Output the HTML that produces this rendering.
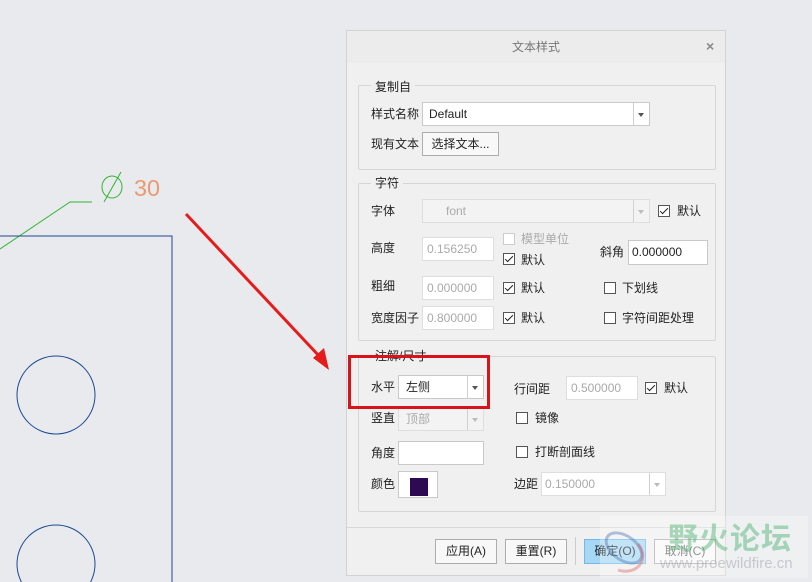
<!DOCTYPE html>
<html><head><meta charset="utf-8"><style>
*{margin:0;padding:0;box-sizing:border-box}
body{width:812px;height:582px;background:#e9eaed;position:relative;overflow:hidden;font-family:"Liberation Sans","Microsoft YaHei","Noto Sans CJK SC",sans-serif;font-size:12px;color:#222}
.a{position:absolute;white-space:nowrap}
.lbl{position:absolute;line-height:16px;white-space:nowrap}
.grp{position:absolute;border:1px solid #d6d6d6;border-radius:2px}
.gt{position:absolute;background:#f0f0f0;padding:0 4px;line-height:14px}
.in{position:absolute;background:#fff;border:1px solid #c9c9c9;line-height:22px;padding-left:6px}
.dis{background:#f3f3f3;border-color:#dedede;color:#aaa}
.cb{position:absolute;width:12px;height:12px;border:1px solid #555;background:#fff}
.cb.on:after{content:"";position:absolute;left:3px;top:0px;width:3px;height:7px;border:solid #222;border-width:0 1.5px 1.5px 0;transform:rotate(45deg)}
.cb.d{border-color:#ccc}
.arr{position:absolute;right:0;top:0;bottom:0;width:16px;border-left:1px solid #d0d0d0}
.arr:after{content:"";position:absolute;left:4px;top:10px;border:3.5px solid transparent;border-top:4px solid #555}
.dis .arr:after{border-top-color:#bbb}
.btn{position:absolute;background:#f8f8f8;border:1px solid #adadad;text-align:center;line-height:22px}
</style></head><body>
<svg class="a" style="left:0;top:0" width="346" height="582">
<polyline points="0,249 70,202 92,202" fill="none" stroke="#2fb52f" stroke-width="1"/>
<ellipse cx="112" cy="187" rx="10" ry="11" fill="none" stroke="#2fb52f"/>
<line x1="104" y1="202" x2="121" y2="172" stroke="#2fb52f"/>
<text x="134" y="196" fill="#ea9a70" font-size="23" font-family="Liberation Sans Narrow, Liberation Sans" textLength="26" lengthAdjust="spacingAndGlyphs">30</text>
<polyline points="0,236 172,236 172,582" fill="none" stroke="#1b4a94" stroke-width="1"/>
<circle cx="56" cy="395" r="39" fill="none" stroke="#1b4a94"/>
<circle cx="56" cy="564" r="39" fill="none" stroke="#1b4a94"/>
<line x1="186" y1="214" x2="320" y2="357" stroke="#e51c1c" stroke-width="3"/>
<polygon points="329,370 313,358 324,348" fill="#e51c1c"/>
</svg>
<div class="a" style="left:346px;top:30px;width:380px;height:546px;background:#f0f0f0;border:1px solid #d2d2d2"></div>
<div class="a" style="left:347px;top:31px;width:378px;height:32px;background:#ececec;text-align:center;line-height:32px;color:#777">文本样式</div>
<div class="a" style="left:706px;top:38px;color:#888;font-weight:bold;font-size:14px">×</div>

<div class="grp" style="left:358px;top:85px;width:358px;height:85px"></div>
<div class="gt" style="left:371px;top:80px">复制自</div>
<div class="lbl" style="left:371px;top:106px">样式名称</div>
<div class="in" style="left:422px;top:102px;width:228px;height:24px">Default<div class="arr"></div></div>
<div class="lbl" style="left:371px;top:136px">现有文本</div>
<div class="btn" style="left:422px;top:132px;width:77px;height:24px">选择文本...</div>

<div class="grp" style="left:358px;top:183px;width:358px;height:158px"></div>
<div class="gt" style="left:371px;top:176px">字符</div>
<div class="lbl" style="left:371px;top:203px">字体</div>
<div class="in dis" style="left:422px;top:199px;width:228px;height:24px;padding-left:23px">font<div class="arr"></div></div>
<div class="cb on" style="left:658px;top:205px"></div><div class="lbl" style="left:677px;top:203px">默认</div>
<div class="lbl" style="left:371px;top:240px">高度</div>
<div class="in dis" style="left:422px;top:237px;width:72px;height:24px;padding-left:4px;background:#fff">0.156250</div>
<div class="cb d" style="left:503px;top:233px"></div><div class="lbl" style="left:521px;top:231px;color:#aaa">模型单位</div>
<div class="cb on" style="left:503px;top:253px"></div><div class="lbl" style="left:521px;top:252px">默认</div>
<div class="lbl" style="left:600px;top:244px">斜角</div>
<div class="in" style="left:628px;top:240px;width:80px;height:25px;padding-left:3px">0.000000</div>
<div class="lbl" style="left:371px;top:278px">粗细</div>
<div class="in dis" style="left:422px;top:276px;width:72px;height:24px;padding-left:4px;background:#fff">0.000000</div>
<div class="cb on" style="left:503px;top:282px"></div><div class="lbl" style="left:521px;top:280px">默认</div>
<div class="cb" style="left:604px;top:282px"></div><div class="lbl" style="left:622px;top:280px">下划线</div>
<div class="lbl" style="left:371px;top:310px">宽度因子</div>
<div class="in dis" style="left:422px;top:306px;width:72px;height:24px;padding-left:4px;background:#fff">0.800000</div>
<div class="cb on" style="left:503px;top:312px"></div><div class="lbl" style="left:521px;top:310px">默认</div>
<div class="cb" style="left:604px;top:312px"></div><div class="lbl" style="left:622px;top:310px">字符间距处理</div>

<div class="grp" style="left:358px;top:356px;width:358px;height:156px"></div>
<div class="gt" style="left:371px;top:349px">注解/尺寸</div>
<div class="lbl" style="left:371px;top:379px">水平</div>
<div class="in" style="left:398px;top:375px;width:86px;height:24px;padding-left:7px">左侧<div class="arr"></div></div>
<div class="lbl" style="left:371px;top:410px">竖直</div>
<div class="in dis" style="left:398px;top:407px;width:86px;height:24px;padding-left:7px">顶部<div class="arr"></div></div>
<div class="lbl" style="left:371px;top:445px">角度</div>
<div class="in" style="left:398px;top:441px;width:86px;height:24px"></div>
<div class="lbl" style="left:371px;top:476px">颜色</div>
<div class="in" style="left:398px;top:471px;width:40px;height:27px;padding:0"><div class="a" style="left:11px;top:6px;width:18px;height:18px;background:#2e0a52"></div></div>
<div class="lbl" style="left:514px;top:381px">行间距</div>
<div class="in dis" style="left:566px;top:376px;width:72px;height:24px;padding-left:4px;background:#fff">0.500000</div>
<div class="cb on" style="left:645px;top:382px"></div><div class="lbl" style="left:664px;top:380px">默认</div>
<div class="cb" style="left:516px;top:412px"></div><div class="lbl" style="left:535px;top:410px">镜像</div>
<div class="cb" style="left:516px;top:446px"></div><div class="lbl" style="left:535px;top:444px">打断剖面线</div>
<div class="lbl" style="left:514px;top:476px">边距</div>
<div class="in dis" style="left:541px;top:472px;width:125px;height:24px;padding-left:3px;background:#fff">0.150000<div class="arr"></div></div>

<div class="a" style="left:348px;top:355px;width:142px;height:54px;border:3px solid #d8141a"></div>
<div class="a" style="left:347px;top:527px;width:378px;height:1px;background:#d8d8d8"></div>
<div class="btn" style="left:435px;top:539px;width:62px;height:25px">应用(A)</div>
<div class="btn" style="left:505px;top:539px;width:62px;height:25px">重置(R)</div>
<div class="a" style="left:575px;top:537px;width:1px;height:28px;background:#ccc"></div>
<div class="btn" style="left:584px;top:539px;width:62px;height:25px;background:#a6d8f5;border-color:#73b8e6">确定(O)</div>
<div class="btn" style="left:654px;top:539px;width:62px;height:25px;color:#666">取消(C)</div>

<div class="a" style="left:600px;top:516px;width:208px;height:62px;background:rgba(255,255,255,.3)"></div>
<svg class="a" style="left:598px;top:518px" width="60" height="62"><ellipse cx="26" cy="30" rx="20" ry="12" transform="rotate(35 26 30)" fill="none" stroke="rgba(70,110,170,.4)" stroke-width="3"/><path d="M20 52 C 40 58 52 40 40 26" fill="none" stroke="rgba(220,90,90,.4)" stroke-width="3"/></svg>
<div class="a" style="left:668px;top:518px;font-size:30px;font-weight:bold;color:rgba(70,175,110,.45);letter-spacing:1px;font-family:'Noto Sans CJK SC',sans-serif;line-height:36px">野火论坛</div>
<div class="a" style="left:660px;top:555px;font-size:15px;color:rgba(160,160,170,.5)">www.proewildfire.cn</div>
</body></html>
